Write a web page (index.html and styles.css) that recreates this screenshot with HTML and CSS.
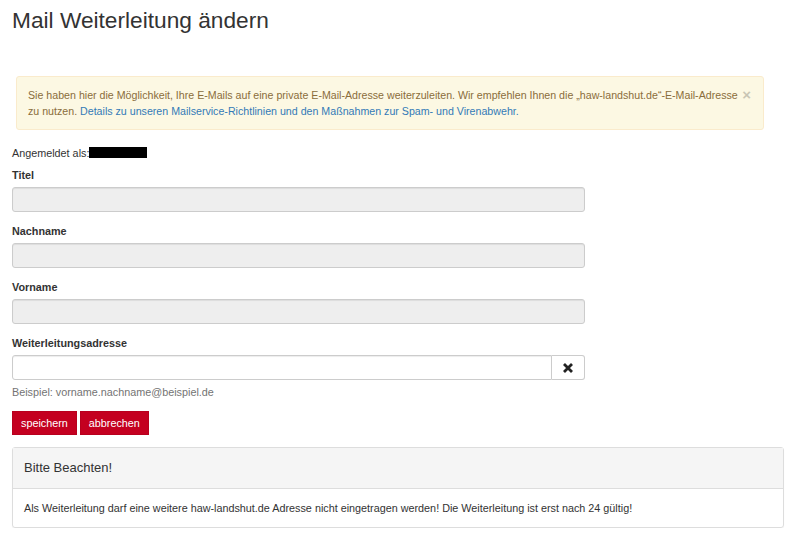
FILE: index.html
```html
<!DOCTYPE html>
<html lang="de">
<head>
    <meta charset="UTF-8">
    <meta name="viewport" content="width=device-width, initial-scale=1.0">
    <title>Mail Weiterleitung ändern</title>
    <link rel="stylesheet" href="styles.css">
</head>
<body>
    <div class="container">
        <h1>Mail Weiterleitung ändern</h1>

        <div class="alert">
            <span class="close">&times;</span>
            Sie haben hier die Möglichkeit, Ihre E-Mails auf eine private E-Mail-Adresse weiterzuleiten. Wir empfehlen Ihnen die „haw-landshut.de“-E-Mail-Adresse zu nutzen.
            <a href="#">Details zu unseren Mailservice-Richtlinien und den Maßnahmen zur Spam- und Virenabwehr.</a>
        </div>

        <p class="login">Angemeldet als:<span class="hidden-name"></span></p>

        <form class="mail-form">
            <div class="form-group">
                <label for="titel">Titel</label>
                <input type="text" id="titel" class="form-control" disabled>
            </div>
            <div class="form-group">
                <label for="nachname">Nachname</label>
                <input type="text" id="nachname" class="form-control" disabled>
            </div>
            <div class="form-group">
                <label for="vorname">Vorname</label>
                <input type="text" id="vorname" class="form-control" disabled>
            </div>
            <div class="form-group">
                <label for="adresse">Weiterleitungsadresse</label>
                <div class="input-group">
                    <input type="text" id="adresse" class="form-control">
                    <button type="button" class="btn-clear" aria-label="leeren">
                        <svg width="12" height="12" viewBox="0 0 12 12">
                            <path d="M2 2 L10 10 M10 2 L2 10" stroke="#222" stroke-width="2.8" stroke-linecap="butt"/>
                        </svg>
                    </button>
                </div>
                <p class="help">Beispiel: vorname.nachname@beispiel.de</p>
            </div>
            <div class="buttons">
                <button type="submit" class="btn">speichern</button>
                <button type="button" class="btn">abbrechen</button>
            </div>
        </form>

        <div class="panel">
            <div class="panel-heading">Bitte Beachten!</div>
            <div class="panel-body">Als Weiterleitung darf eine weitere haw-landshut.de Adresse nicht eingetragen werden! Die Weiterleitung ist erst nach 24 gültig!</div>
        </div>
    </div>
</body>
</html>
```

FILE: styles.css
```css
/* Grundlayout */
body {
    font-family: "Liberation Sans", Arial, sans-serif;
    font-size: 10.8px;
    line-height: 16px;
    color: #333;
    margin: 0;
    background: #fff;
}

.container {
    padding: 8px 16px 0 12px;
}

h1 {
    font-size: 22.7px;
    font-weight: normal;
    line-height: 24px;
    margin: 0 0 44px;
}

a {
    color: #337ab7;
    text-decoration: none;
}

/* Hinweisbox */
.alert {
    background: #fcf8e3;
    border: 1px solid #faebcc;
    border-radius: 3px;
    color: #8a6d3b;
    font-size: 10.65px;
    margin: 0 20px 15px 4px;
    padding: 10px 12px 10px 11px;
}

.close {
    float: right;
    margin-left: 3px;
    font-size: 15px;
    font-weight: bold;
    color: #000;
    opacity: 0.2;
}

.login {
    margin: 0 0 6px;
}

.hidden-name {
    display: inline-block;
    width: 58px;
    height: 11px;
    background: #000;
    vertical-align: -1px;
}

/* Formular */
.form-group {
    margin-bottom: 11px;
}

label {
    display: block;
    font-weight: bold;
    margin-bottom: 4px;
}

.form-control {
    box-sizing: border-box;
    display: block;
    width: 573px;
    height: 25px;
    padding: 4px 8px;
    border: 1px solid #ccc;
    border-radius: 3px;
    background: #fff;
    font: inherit;
    box-shadow: inset 0 1px 1px rgba(0, 0, 0, 0.075);
}

.form-control:disabled {
    background: #eee;
}

.input-group {
    display: flex;
    width: 573px;
}

.input-group .form-control {
    flex: 1;
    width: auto;
    border-radius: 3px 0 0 3px;
}

.btn-clear {
    width: 33px;
    height: 25px;
    border: 1px solid #ccc;
    border-left: 0;
    border-radius: 0 3px 3px 0;
    background: #fff;
    display: flex;
    align-items: center;
    justify-content: center;
    padding: 0;
}

.help {
    color: #737373;
    margin: 4px 0 0;
}

.buttons {
    display: flex;
    gap: 3px;
    margin-bottom: 12px;
}

.btn {
    background: #c40020;
    color: #fff;
    border: 1px solid #b8001e;
    font: inherit;
    padding: 3px 8px;
    height: 24px;
    cursor: pointer;
}

/* Hinweis-Panel */
.panel {
    border: 1px solid #ddd;
    border-radius: 3px;
    box-shadow: 0 1px 1px rgba(0, 0, 0, 0.05);
}

.panel-heading {
    background: #f5f5f5;
    border-bottom: 1px solid #ddd;
    font-size: 13px;
    padding: 12px 11px;
}

.panel-body {
    padding: 11px 11px;
}
```
